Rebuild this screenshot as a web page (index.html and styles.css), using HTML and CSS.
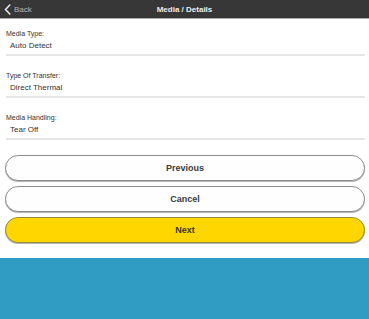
FILE: index.html
```html
<!DOCTYPE html>
<html>
<head>
<meta charset="utf-8">
<link rel="stylesheet" href="styles.css">
</head>
<body>
<div class="page">
  <header class="topbar">
    <div class="back">
      <svg class="chev" width="7" height="11" viewBox="0 0 7 11"><path d="M5.8 1 L1.5 5.5 L5.8 10" fill="none" stroke="#e6e6e6" stroke-width="1.6" stroke-linecap="round" stroke-linejoin="round"/></svg>
      <span>Back</span>
    </div>
    <div class="title">Media / Details</div>
    <div></div>
  </header>
  <main class="fields">
    <div class="field">
      <div class="label">Media Type:</div>
      <div class="value">Auto Detect</div>
    </div>
    <div class="field">
      <div class="label">Type Of Transfer:</div>
      <div class="value">Direct Thermal</div>
    </div>
    <div class="field">
      <div class="label">Media Handling:</div>
      <div class="value">Tear Off</div>
    </div>
  </main>
  <div class="buttons">
    <button class="btn">Previous</button>
    <button class="btn">Cancel</button>
    <button class="btn primary">Next</button>
  </div>
  <div class="footer"></div>
</div>
</body>
</html>
```
FILE: styles.css
```css
html, body {
  margin: 0;
  padding: 0;
  background: #ffffff;
}
.page {
  width: 369px;
  height: 319px;
  display: flex;
  flex-direction: column;
  font-family: "Liberation Sans", Arial, sans-serif;
  color: #333;
  overflow: hidden;
}
.topbar {
  height: 18px;
  background: #373737;
  border-bottom: 1px solid #a8a8a8;
  display: grid;
  grid-template-columns: 1fr auto 1fr;
  align-items: center;
}
.back {
  display: flex;
  align-items: center;
  gap: 3px;
  padding-left: 4px;
  color: #b8b8b8;
  font-size: 8px;
}
.title {
  color: #eeeeee;
  font-size: 8px;
  font-weight: bold;
}
.fields {
  padding: 10px 4px 0 6px;
  display: flex;
  flex-direction: column;
  gap: 15px;
}
.field {
  border-bottom: 2px solid #e6e6e6;
  padding-bottom: 3px;
}
.label {
  font-size: 7px;
  line-height: 10px;
  color: #333;
}
.value {
  font-size: 8px;
  line-height: 10px;
  margin-top: 2px;
  padding-left: 4px;
  color: #333;
}
.buttons {
  margin-top: 15px;
  padding: 0 4px 0 5px;
  display: flex;
  flex-direction: column;
  gap: 5px;
}
.btn {
  height: 26px;
  border: 1px solid #8e8e8e;
  border-radius: 13px;
  background: #fefefe;
  font-family: "Liberation Sans", Arial, sans-serif;
  font-size: 9px;
  font-weight: bold;
  color: #3a3a3a;
  box-shadow: 0 1px 0 #b5b5b5;
  padding: 0;
}
.btn.primary {
  background: #ffd600;
  border-color: #968a3a;
  color: #3a3520;
}
.footer {
  margin-top: 15px;
  flex: 1;
  background: #309cc4;
}
```
